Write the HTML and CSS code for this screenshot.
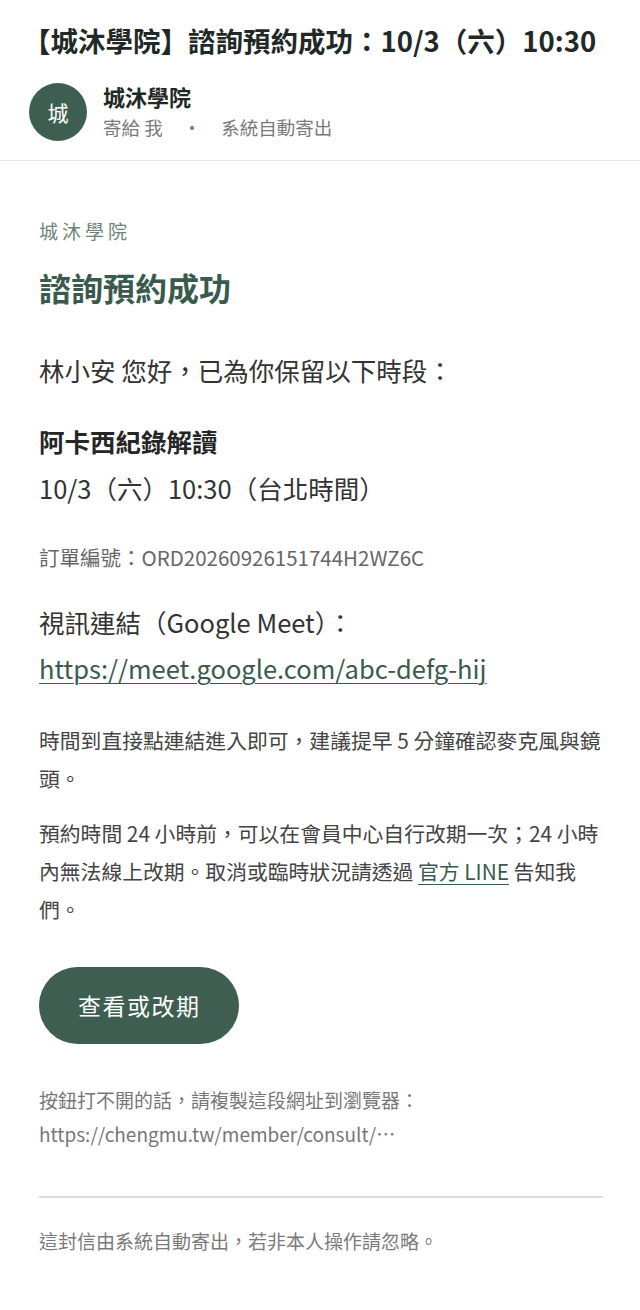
FILE: index.html
```html
<!DOCTYPE html>
<html lang="zh-Hant">
<head>
<meta charset="utf-8">
<title>諮詢預約成功</title>
<link rel="stylesheet" href="styles.css">
</head>
<body>
<header class="mail-head">
  <h1 class="subject">【城沐學院】諮詢預約成功：10/3（六）10:30</h1>
  <div class="sender">
    <div class="avatar">城</div>
    <div class="sender-info">
      <div class="sender-name">城沐學院</div>
      <div class="sender-meta"><span>寄給 我</span><span class="dot">·</span><span>系統自動寄出</span></div>
    </div>
  </div>
</header>
<main class="mail-body">
  <div class="brand">城沐學院</div>
  <h2 class="heading">諮詢預約成功</h2>
  <p class="greeting">林小安 您好，已為你保留以下時段：</p>
  <div class="slot">
    <div class="course">阿卡西紀錄解讀</div>
    <div class="when">10/3（六）10:30（台北時間）</div>
  </div>
  <p class="order">訂單編號：ORD20260926151744H2WZ6C</p>
  <div class="meet">
    <div class="meet-label">視訊連結（Google Meet）：</div>
    <a class="meet-link" href="#">https://meet.google.com/abc-defg-hij</a>
  </div>
  <p class="para">時間到直接點連結進入即可，建議提早 5 分鐘確認麥克風與鏡頭。</p>
  <p class="para">預約時間 24 小時前，可以在會員中心自行改期一次；24 小時內無法線上改期。取消或臨時狀況請透過 <a class="inline-link" href="#">官方 LINE</a> 告知我們。</p>
  <a class="btn" href="#">查看或改期</a>
  <p class="fallback">按鈕打不開的話，請複製這段網址到瀏覽器：<br>https://chengmu.tw/member/consult/…</p>
  <hr class="rule">
  <p class="footer">這封信由系統自動寄出，若非本人操作請忽略。</p>
</main>
</body>
</html>
```

FILE: styles.css
```css
* { box-sizing: border-box; }
html, body {
  margin: 0;
  padding: 0;
  background: #ffffff;
  font-family: "Noto Sans CJK TC", "Noto Sans", sans-serif;
  color: #333333;
}
.mail-head {
  padding: 20px 20px 17px 29px;
  border-bottom: 1px solid #e6e6e6;
}
.subject {
  margin: 0 0 21px -6px;
  font-size: 27.5px;
  line-height: 40px;
  font-weight: 700;
  color: #1f2a26;
  white-space: nowrap;
}
.sender {
  display: flex;
  align-items: center;
  gap: 16px;
}
.avatar {
  flex: none;
  width: 58px;
  height: 58px;
  border-radius: 50%;
  background: #3f5e52;
  color: #ffffff;
  font-size: 21px;
  display: flex;
  align-items: center;
  justify-content: center;
}
.sender-name {
  font-size: 22px;
  font-weight: 700;
  line-height: 30px;
  color: #1f2a26;
}
.sender-meta {
  font-size: 18.5px;
  line-height: 32px;
  color: #7a7a7a;
  display: flex;
  gap: 20px;
}
.mail-body {
  padding: 55px 37px 40px 39px;
}
.brand {
  font-size: 19px;
  letter-spacing: 4px;
  color: #6e8279;
  line-height: 30px;
}
.heading {
  margin: 20px 0 0 0;
  font-size: 32px;
  line-height: 42px;
  font-weight: 700;
  color: #3b5a4e;
}
.greeting {
  margin: 42px 0 0 0;
  font-size: 25.5px;
  line-height: 40px;
}
.slot {
  margin-top: 31px;
}
.course {
  font-size: 25.5px;
  font-weight: 700;
  line-height: 40px;
  color: #262626;
}
.when {
  margin-top: 7px;
  font-size: 25.5px;
  line-height: 40px;
}
.order {
  margin: 33px 0 0 0;
  font-size: 20.5px;
  line-height: 32px;
  color: #666666;
}
.meet {
  margin-top: 26px;
  font-size: 25.5px;
  line-height: 46px;
}
.meet-link {
  color: #3b5a4e;
  text-decoration: underline;
  text-underline-offset: 4px;
  text-decoration-thickness: 1px;
}
.para {
  margin: 30px 0 0 0;
  font-size: 20.8px;
  line-height: 38px;
  color: #444444;
}
.para + .para {
  margin-top: 17px;
}
.inline-link {
  color: #3b5a4e;
  text-decoration: underline;
  text-underline-offset: 4px;
  text-decoration-thickness: 1px;
}
.btn {
  display: inline-block;
  margin-top: 39px;
  height: 77px;
  line-height: 77px;
  padding: 0 38px 0 39px;
  border-radius: 39px;
  background: #3f5e52;
  color: #ffffff;
  font-size: 23px;
  letter-spacing: 1.5px;
  text-decoration: none;
}
.fallback {
  margin: 39px 0 0 0;
  font-size: 19px;
  line-height: 34px;
  color: #777777;
}
.rule {
  margin: 45px 0 0 0;
  border: 0;
  border-top: 2px solid #dcdcdc;
}
.footer {
  margin: 28px 0 0 0;
  font-size: 19px;
  line-height: 30px;
  color: #7a7a7a;
}
```
